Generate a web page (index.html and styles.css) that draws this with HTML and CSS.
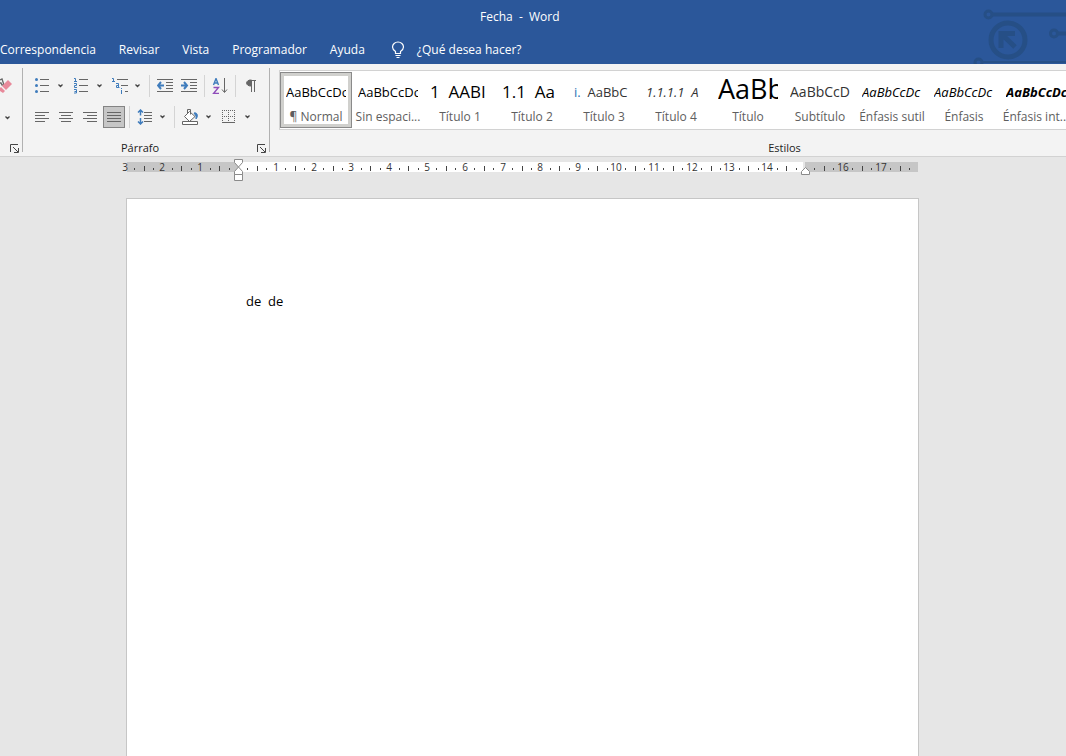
FILE: index.html
```html
<!DOCTYPE html>
<html lang="es">
<head>
<meta charset="utf-8">
<title>Fecha - Word</title>
<link rel="stylesheet" href="styles.css">
</head>
<body>
<header class="header">
  <svg class="circuit" width="106" height="64" viewBox="0 0 106 64" fill="none" stroke="#264f86" aria-hidden="true">
    <circle cx="28.500" cy="14.500" r="3.500" stroke-width="3"/><path d="M33 14.500h73" stroke-width="4"/>
    <circle cx="94" cy="33.500" r="3.500" stroke-width="3"/><path d="M98 33.500h8" stroke-width="4"/>
    <circle cx="18.500" cy="62.500" r="3.500" stroke-width="3"/><path d="M23 62h83" stroke-width="2"/>
    <circle cx="48" cy="40" r="17" stroke-width="5"/>
    <path d="M41 48V33.500H55M41.500 34L55 47" stroke-width="5"/>
  </svg>
  <div class="title">Fecha&nbsp; -&nbsp; Word</div>
  <nav class="tabs">
    <a href="#correspondencia">Correspondencia</a>
    <a href="#revisar">Revisar</a>
    <a href="#vista">Vista</a>
    <a href="#programador">Programador</a>
    <a href="#ayuda">Ayuda</a>
    <button class="tell" type="button">
      <svg width="14" height="18" viewBox="0 0 14 18" fill="none" stroke="#fff" stroke-width="1.200"><path d="M4.500 12.500V10.500C2.500 9 1.500 8 1.500 6a5.500 5 0 0 1 11 0c0 2-1 3-3 4.500v2zM4.500 14.500h5M5.500 16.500h3"/></svg>
      <span>¿Qué desea hacer?</span>
    </button>
  </nav>
</header>

<section class="ribbon" aria-label="Cinta de opciones">
  <div class="group font-group">
    <button class="eraser" type="button" aria-label="Borrar formato"><svg width="14" height="18" viewBox="0 0 14 18"><path d="M0 3l2-1 2 6H2L1 6H0" fill="none" stroke="#666" stroke-width="1.300"/><path d="M8 3l4 4-6 6-4-4z"/><path d="M1 10l4 4-2 2-3-2v-3z"/></svg></button>
    <button class="chev" type="button" aria-label="Más opciones de fuente"><svg width="5" height="4"><path d="M.5.500l2 2 2-2"/></svg></button>
    <div class="caption"><button class="launch" type="button" aria-label="Fuente"><svg width="9" height="9"><path d="M.5 8V.500H8M3 3l5 5M8.500 4v4.500H4"/></svg></button></div>
  </div>
  <div class="rule"></div>
  <div class="group para-group">
    <div class="row">
      <span class="split"><button class="tool" type="button" aria-label="Viñetas"><svg width="16" height="16"><path d="M6 1.500h9M6 7.500h9M6 13.500h9"/><g fill="#3f7cbc"><circle cx="2.500" cy="1.500" r="1.500"/><circle cx="2.500" cy="7.500" r="1.500"/><circle cx="2.500" cy="13.500" r="1.500"/></g></svg></button><button class="chev" type="button" aria-label="Opciones de viñetas"><svg width="5" height="4"><path d="M.5.500l2 2 2-2"/></svg></button></span>
      <span class="split"><button class="tool" type="button" aria-label="Numeración"><svg width="16" height="16"><path d="M6 1.500h9M6 7.500h9M6 13.500h9"/><path class="blue" d="M1 .5h1.500V3M1 3.500h3M1 5.500h2.500v2H1.500v2H4M1 11.500h2.500v3.500H1M1.500 13.500h2"/></svg></button><button class="chev" type="button" aria-label="Opciones de numeración"><svg width="5" height="4"><path d="M.5.500l2 2 2-2"/></svg></button></span>
      <span class="split"><button class="tool snug" type="button" aria-label="Lista multinivel"><svg width="16" height="16"><path d="M5 1.500h11M9 7.500h7M13 13.500h3"/><path class="blue" d="M0 .5h1.500V3M0 3.500h3M4 5.500h2.500V9M6.500 7.500h-2v2h3M9.500 10v1M9.500 12v4"/></svg></button><button class="chev" type="button" aria-label="Opciones de lista multinivel"><svg width="5" height="4"><path d="M.5.500l2 2 2-2"/></svg></button></span>
      <i class="sep"></i>
      <button class="tool" type="button" aria-label="Disminuir sangría"><svg width="16" height="16"><path d="M0 1.500h16M9 4.500h7M9 7.500h7M9 10.500h7M0 13.500h16"/><path class="blue thick" d="M1 7.500h6M4 4L1 7.500 4 11"/></svg></button>
      <button class="tool" type="button" aria-label="Aumentar sangría"><svg width="16" height="16"><path d="M0 1.500h16M9 4.500h7M9 7.500h7M9 10.500h7M0 13.500h16"/><path class="blue thick" d="M0 7.500h6M3 4l3 3.500L3 11"/></svg></button>
      <i class="sep"></i>
      <button class="tool" type="button" aria-label="Ordenar"><svg width="16" height="16"><path class="blue" d="M1.500 7L4 .5 6.500 7M2.500 5h3" stroke-width="1.400"/><path class="violet" d="M1.500 9.500h5l-5 6h5.500" stroke-width="1.400"/><path d="M12.500 0v14M10 11.500l2.500 3 2.500-3"/></svg></button>
      <i class="sep"></i>
      <button class="tool" type="button" aria-label="Mostrar todo"><svg width="16" height="16"><path d="M13 2.500H6M8.500 3v11M11.500 3v11"/><path class="solid" d="M8.500 2C2 1.500 2 8.500 8.500 8z"/></svg></button>
    </div>
    <div class="row">
      <button class="tool" type="button" aria-label="Alinear a la izquierda"><svg width="16" height="16"><path d="M1 3.500h14M1 6.500h10M1 9.500h14M1 12.500h10"/></svg></button>
      <button class="tool" type="button" aria-label="Centrar"><svg width="16" height="16"><path d="M1 3.500h14M3 6.500h10M1 9.500h14M3 12.500h10"/></svg></button>
      <button class="tool" type="button" aria-label="Alinear a la derecha"><svg width="16" height="16"><path d="M1 3.500h14M5 6.500h10M1 9.500h14M5 12.500h10"/></svg></button>
      <button class="tool pressed" type="button" aria-label="Justificar" aria-pressed="true"><svg width="16" height="16"><path d="M1 3.500h14M1 6.500h14M1 9.500h14M1 12.500h14"/></svg></button>
      <i class="sep"></i>
      <span class="split"><button class="tool snug" type="button" aria-label="Espaciado"><svg width="16" height="16"><path d="M7 3.500h8M7 6.500h8M7 9.500h8M7 12.500h8"/><path class="blue" stroke-width="1.500" d="M3.500 1v5.500M1 3.500L3.500 1 6 3.500M3.500 9v6M1 12.500L3.500 15 6 12.500"/></svg></button><button class="chev" type="button" aria-label="Opciones de espaciado"><svg width="5" height="4"><path d="M.5.500l2 2 2-2"/></svg></button></span>
      <i class="sep"></i>
      <span class="split"><button class="tool" type="button" aria-label="Sombreado"><svg width="16" height="16"><path class="drip" d="M12 4c4-1 4 4 2 6V7z"/><path class="paper" d="M7.500 2.500l5.500 5-5.500 5-5-5z"/><path d="M5.500 5V.500h3v5"/><path class="paper" d="M.5 12.500h15v3H.5z"/></svg></button><button class="chev" type="button" aria-label="Opciones de sombreado"><svg width="5" height="4"><path d="M.5.500l2 2 2-2"/></svg></button></span>
      <span class="split"><button class="tool" type="button" aria-label="Bordes"><svg width="16" height="16"><path d="M1 1.500h13M1 7.500h13M1.500 1v12M7.500 1v12M13.500 1v12" stroke-dasharray="1 1"/><path d="M1 13.500h13"/></svg></button><button class="chev" type="button" aria-label="Opciones de bordes"><svg width="5" height="4"><path d="M.5.500l2 2 2-2"/></svg></button></span>
    </div>
    <div class="caption"><span>Párrafo</span><button class="launch" type="button" aria-label="Configuración de párrafo"><svg width="9" height="9"><path d="M.5 8V.500H8M3 3l5 5M8.500 4v4.500H4"/></svg></button></div>
  </div>
  <div class="rule"></div>
  <div class="group style-group">
    <div class="gallery">
      <button class="style selected" type="button"><span class="sample">AaBbCcDc</span><span class="name">¶ Normal</span></button>
      <button class="style" type="button"><span class="sample">AaBbCcDc</span><span class="name">Sin espaci...</span></button>
      <button class="style" type="button"><span class="sample h1">1&nbsp; AABI</span><span class="name">Título 1</span></button>
      <button class="style" type="button"><span class="sample h2">1.1&nbsp; Aa</span><span class="name">Título 2</span></button>
      <button class="style" type="button"><span class="sample h3"><b>i.</b>&nbsp; AaBbC</span><span class="name">Título 3</span></button>
      <button class="style" type="button"><span class="sample h4">1.1.1.1&nbsp; A</span><span class="name">Título 4</span></button>
      <button class="style" type="button"><span class="sample big">AaBb</span><span class="name">Título</span></button>
      <button class="style" type="button"><span class="sample sub">AaBbCcD</span><span class="name">Subtítulo</span></button>
      <button class="style" type="button"><span class="sample em">AaBbCcDc</span><span class="name">Énfasis sutil</span></button>
      <button class="style" type="button"><span class="sample em">AaBbCcDc</span><span class="name">Énfasis</span></button>
      <button class="style" type="button"><span class="sample em strong">AaBbCcDc</span><span class="name">Énfasis int...</span></button>
    </div>
    <div class="caption"><span>Estilos</span></div>
  </div>
</section>

<main class="workspace">
  <svg class="ruler" id="ruler" width="800" height="25" viewBox="0 0 800 25" aria-label="Regla">
    <path d="M7 5h112v10H7z" fill="#c6c6c6"/>
    <path d="M119 5h564v10H119z" fill="#fff"/>
    <path d="M685 5h113v10H685z" fill="#c6c6c6"/>
    <g id="marks"></g>
    <g fill="#fff" stroke="#8a8a8a">
      <path d="M114.500 2.500h8v3l-4 4.500-4-4.500zM114.500 17.500v-3L118.500 10l4 4.500v3zM114.500 17.500h8v6h-8z"/>
      <path d="M681.500 17.500v-3l4-4 4 4v3z"/>
    </g>
  </svg>
  <article class="page" contenteditable="true" spellcheck="false" aria-label="Documento"><p>de&nbsp; de</p></article>
</main>
<script src="ruler.js"></script>
</body>
</html>
```
FILE: styles.css
```css
* { box-sizing: border-box; }
body {
  margin: 0;
  min-height: 100vh;
  display: flex;
  flex-direction: column;
  overflow: hidden;
  background: #e6e6e6;
  color: #222;
  font: 12px/16px "Open Sans", "Noto Sans", sans-serif;
}
button {
  margin: 0;
  padding: 0;
  border: 0;
  background: none;
  color: inherit;
  font: inherit;
}
.header {
  position: relative;
  height: 64px;
  background: #2b579a;
  color: #fff;
}
.circuit { position: absolute; top: 0; right: 0; }
.title { padding: 9px 0 0 480px; }
.tabs {
  display: flex;
  align-items: center;
  gap: 23px;
  padding-top: 16px;
}
.tabs a { color: #fff; text-decoration: none; }
.tell { display: flex; gap: 12px; align-items: center; margin-left: 3px; }
.ribbon {
  display: flex;
  height: 93px;
  overflow: hidden;
  background: #f3f3f3;
  border-bottom: 1px solid #d2d2d2;
}
.ribbon svg { display: block; flex: none; }
.ribbon path { fill: none; stroke: #666; }
.ribbon .eraser path { stroke: none; }
.ribbon .eraser path:first-child { stroke: #666; }
.ribbon .eraser path + path { fill: #e8899a; }
.ribbon .blue { stroke: #3f7cbc; }
.ribbon .violet { stroke: #8f4dba; }
.ribbon .solid { fill: #666; }
.ribbon .drip { fill: #3f7cbc; stroke: #3f7cbc; }
.ribbon .paper { fill: #fff; }
.ribbon .thick { stroke-width: 2; }
.rule { flex: none; width: 1px; margin: 4px 0; background: #b1b1b1; }
.group { display: flex; flex-direction: column; flex: none; }
.font-group { width: 22px; padding-top: 13px; align-items: flex-start; }
.font-group .chev { margin-top: 12px; }
.para-group { width: 246px; padding: 11px 0 0 8px; gap: 9px; }
.para-group .caption { padding-right: 3px; }
.para-group .caption span { padding-right: 8px; }
.style-group { width: 1028px; padding: 6px 0 0 9px; }
.style-group .caption { padding-right: 8px; }
.row { display: flex; height: 22px; }
.split { display: flex; margin-right: 3px; }
.tool { width: 22px; height: 22px; padding: 3px; flex: none; }
.row > .tool { margin-right: 2px; }
.tool.snug { width: 21px; }
.pressed { background: #c6c6c6; box-shadow: 0 0 0 1px #838383 inset; }
.chev { width: 14px; height: 22px; display: flex; align-items: center; justify-content: center; }
.ribbon .chev path { stroke: #444; stroke-width: 1.3; }
.sep { width: 1px; margin: 0 4px 0 2px; background: #d4d4d4; flex: none; }
.caption {
  display: flex;
  align-items: center;
  justify-content: center;
  align-self: stretch;
  height: 16px;
  margin-top: auto;
  font-size: 11px;
}
.caption span { flex: 1; text-align: center; }
.font-group .launch { margin: 0 3px 0 auto; }
.ribbon .launch path { stroke: #444; }
.gallery {
  display: flex;
  height: 60px;
  padding-top: 1px;
  border: 1px solid #d2d2d2;
  border-right: 0;
  background: #fff;
}
.style {
  flex: none;
  width: 72px;
  height: 56px;
  padding: 6px 5px 0;
  display: flex;
  flex-direction: column;
  align-items: center;
}
.selected { box-shadow: 0 0 0 1px #8a8a8a inset, 0 0 0 4px #d0d0cd inset; }
.sample {
  width: 60px;
  height: 29px;
  overflow: hidden;
  white-space: nowrap;
  text-align: left;
  font-size: 13px;
  line-height: 28px;
  color: #000;
}
.name { color: #5e5e5e; line-height: 20px; white-space: nowrap; }
.h1, .h2 { font-size: 17px; font-weight: 500; }
.h3, .h4 { color: #333; }
.h3 b { color: #2e74b5; font-weight: 400; }
.h4, .em { font-style: italic; }
.big { font-size: 27px; line-height: 22px; }
.sub { font-size: 14px; color: #333; }
.strong { font-weight: 700; }
.workspace { flex: 1; display: flex; flex-direction: column; padding-left: 120px; }
.ruler { display: block; flex: none; }
.ruler text { font: 10px "Open Sans", sans-serif; fill: #333; text-anchor: middle; }
.page {
  flex: 1;
  width: 100%;
  max-width: 793px;
  margin: 16px 0 0 6px;
  padding: 94px 119px 0;
  border: 1px solid #c6c6c6;
  border-bottom: 0;
  background: #fff;
  color: #000;
  font-size: 13px;
}
.page p { margin: 0; }
```
FILE: ruler.js
```js
const NS = "http://www.w3.org/2000/svg";
const marks = document.getElementById("marks");
const zero = 118;
const quarter = 9.45;

for (let i = -12; i <= 71; i++) {
  const x = Math.round(zero + i * quarter);
  const cm = i / 4;
  if (i === 0 || cm === 15) continue;
  if (i % 4 === 0) {
    const text = document.createElementNS(NS, "text");
    text.setAttribute("x", x);
    text.setAttribute("y", 14);
    text.textContent = Math.abs(cm);
    marks.append(text);
  } else {
    const half = i % 2 === 0;
    const tick = document.createElementNS(NS, "path");
    tick.setAttribute("d", half ? `M${x} 9v5h1v-5z` : `M${x} 11v2h1v-2z`);
    tick.setAttribute("fill", "#444");
    marks.append(tick);
  }
}
```
